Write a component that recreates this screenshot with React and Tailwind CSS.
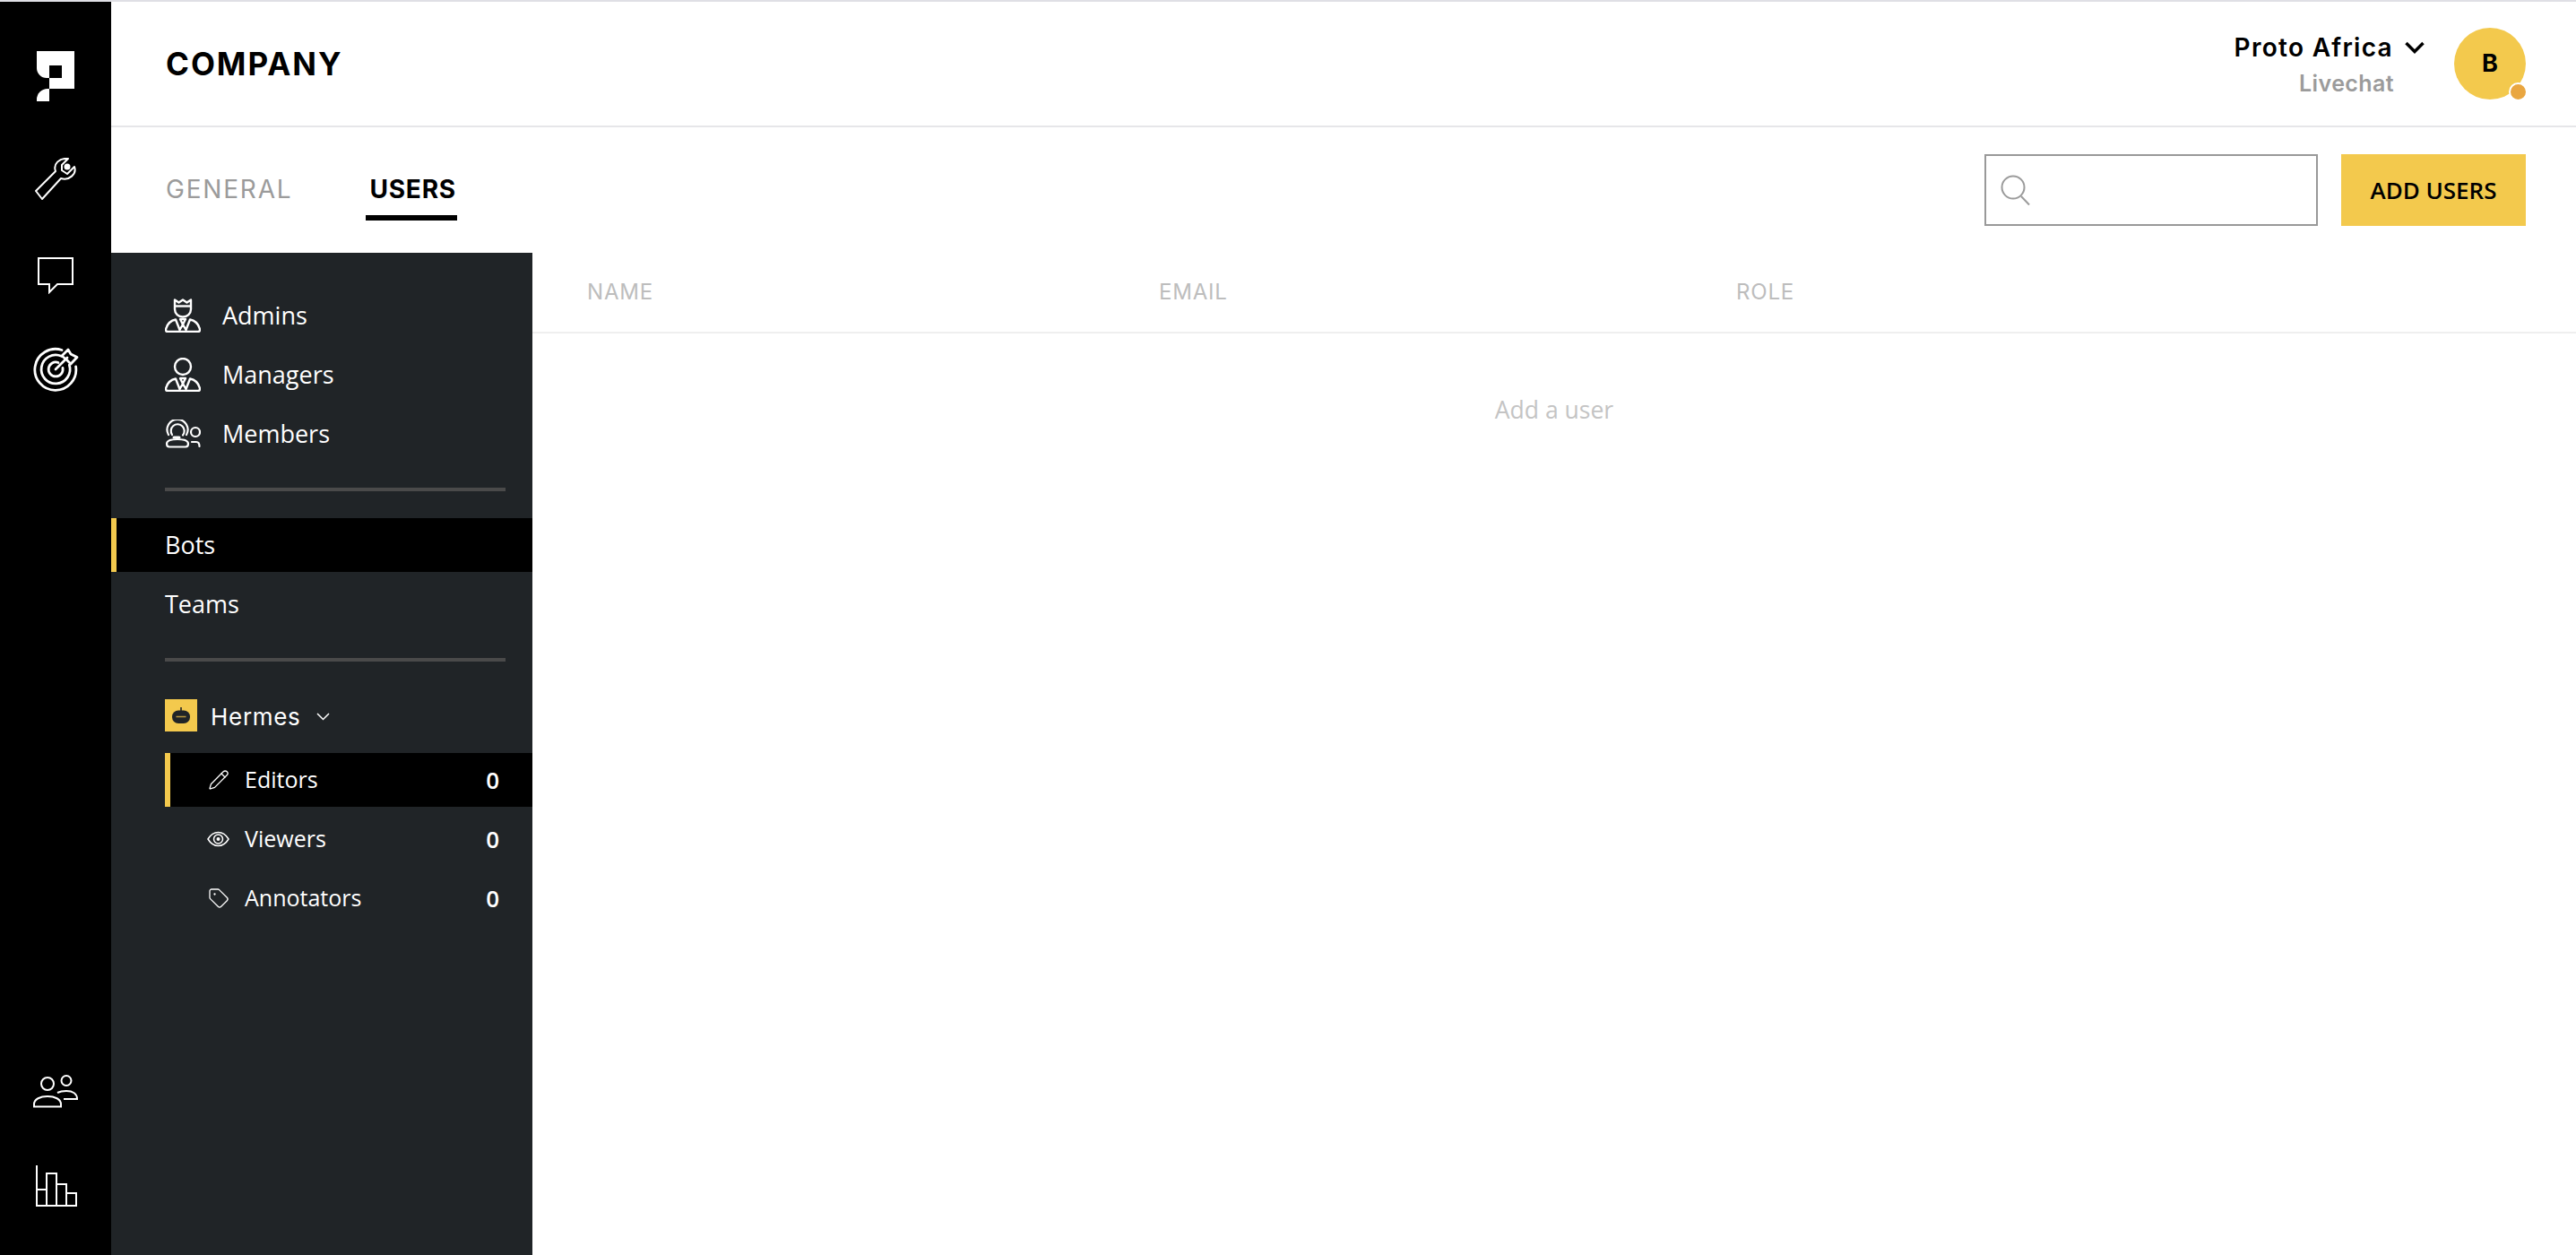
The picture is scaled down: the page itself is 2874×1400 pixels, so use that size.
import React from 'react';
import { Pencil, Tag } from 'lucide-react';

function Logo() {
  return (
    <svg width="42" height="56" viewBox="0 0 42 56" fill="#fff">
      <path fillRule="evenodd" d="M0 0H42V42H14V30H11A11 11 0 0 1 0 19ZM14 16V30H28V16Z" />
      <path d="M14 42V56H0V54A12 12 0 0 1 12 42Z" />
    </svg>
  );
}

function Wrench() {
  return (
    <svg width="47" height="48" viewBox="0 0 47 48" fill="none" stroke="#fff" strokeWidth="2" strokeLinejoin="round">
      <path d="M1 37L23 15C20 7 27 0 37 1L30 8V14L36 18L44 10C47 18 38 26 29 23L8 46Z" />
      <circle cx="36" cy="10" r="3.5" fill="#fff" stroke="none" />
    </svg>
  );
}

function Chat() {
  return (
    <svg width="40" height="41" viewBox="0 0 40 41" fill="none" stroke="#fff" strokeWidth="2">
      <path d="M1 1H39V30H22L13 39V30H1Z" />
    </svg>
  );
}

function Target() {
  return (
    <svg width="51" height="50" viewBox="0 0 51 50" fill="none" stroke="#fff" strokeWidth="2.8" strokeLinecap="round" strokeLinejoin="round">
      <path d="M32 3.5A23 23 0 1 0 47.6 22" />
      <path d="M31.5 10.3A16 16 0 1 0 40.3 20" />
      <path d="M28 17.5A8 8 0 1 0 33 23.5" />
      <path d="M25 25L38 12" />
      <path d="M32 10L39 3L42 8L49 11.5L42 19L37.5 14.5Z" />
    </svg>
  );
}

function TeamIcon() {
  return (
    <svg width="50" height="37" viewBox="0 0 50 37" fill="none" stroke="#fff" strokeWidth="2">
      <circle cx="16" cy="10" r="7" />
      <path d="M1 35.5V33C1 27 8 24 16 24C24 24 31 27 31 33V35.5Z" />
      <circle cx="37" cy="6.5" r="5.5" />
      <path d="M27 20C30 18.5 33 18 37 18C44 18 49 21 49 27H34" />
    </svg>
  );
}

function BarsIcon() {
  return (
    <svg width="47" height="47" viewBox="0 0 47 47" fill="none" stroke="#fff" strokeWidth="2">
      <path d="M2 0V45H46V31H35V45M35 45V21H24V45M24 45V9H13V45M13 45V27H2" />
    </svg>
  );
}

// shoulders and tie shared by the admin and manager icons
function Shoulders() {
  return (
    <g>
      <path d="M3 37H37C39 37 39.5 35 38.5 33C37 28 33 24.5 28 23.5L23.5 35L20 29L16.5 35L12 23.5C7 24.5 3 28 1.5 33C0.5 35 1 37 3 37Z" />
      <path d="M17 23H23L20 29Z" />
    </g>
  );
}

function AdminIcon() {
  return (
    <svg width="40" height="38" viewBox="0 0 40 38" fill="none" stroke="#fff" strokeWidth="2.4" strokeLinejoin="round">
      <path d="M11 1.500V12A9 8.500 0 0 0 29 12V1.500L24.500 4.500L20 1.500L15.500 4.500Z" />
      <path d="M11 8.500H29" />
      <Shoulders />
    </svg>
  );
}

function ManagerIcon() {
  return (
    <svg width="40" height="38" viewBox="0 0 40 38" fill="none" stroke="#fff" strokeWidth="2.4" strokeLinejoin="round">
      <circle cx="20" cy="10" r="9" />
      <Shoulders />
    </svg>
  );
}

function MemberIcon() {
  return (
    <svg width="40" height="32" viewBox="0 0 40 32" fill="none" stroke="#fff" strokeWidth="2.200" strokeLinecap="round">
      <path d="M4 17A11.500 11.500 0 1 1 24 17" />
      <path d="M8 17A7.500 7.500 0 1 1 20 17.500" />
      <path d="M10 20H16" strokeWidth="3" />
      <path d="M2 27C2 23.500 7 22 14 22C21 22 26 23.500 26 27C26 29.500 25 30.500 23 30.500H5C3 30.500 2 29.500 2 27Z" />
      <circle cx="34" cy="14" r="5" />
      <path d="M30 25H35C37 25 38.500 26.500 38.500 30" />
    </svg>
  );
}

function PotIcon() {
  return (
    <svg width="20" height="18" viewBox="0 0 20 18">
      <path d="M9.200 0H10.800V4H9.200Z" fill="#202427" />
      <rect x="0" y="3.500" width="20" height="14.500" rx="7" fill="#202427" />
      <path d="M4.500 10.500H15.500" stroke="#b8963c" strokeWidth="1.500" />
    </svg>
  );
}

function EyeIcon() {
  return (
    <svg width="25" height="18" viewBox="0 0 25 18" fill="none" stroke="#fff" strokeWidth="1.500">
      <path d="M1 9C4 4 8 1.500 12.500 1.500C17 1.500 21 4 24 9C21 14 17 16.500 12.500 16.500C8 16.500 4 14 1 9Z" />
      <circle cx="12.500" cy="9" r="5" />
      <circle cx="12.500" cy="9" r="2" fill="#fff" stroke="none" />
    </svg>
  );
}

function RoleRow({ icon, label }) {
  return (
    <div className="flex h-[60px] items-center gap-[24px] pl-[60px] text-[27px] font-medium text-white">
      <span className="flex w-[40px] justify-center">{icon}</span>
      <span>{label}</span>
    </div>
  );
}

function SubRow({ icon, label, active }) {
  return (
    <div className={`flex h-[60px] items-center justify-between pr-[37px] text-[25px] font-medium text-white ${active ? 'bg-black border-l-[6px] border-[#f3c94d] pl-[41px]' : 'pl-[47px]'}`}>
      <div className="flex items-center gap-[17px]">
        <span className="flex w-[25px] justify-center">{icon}</span>
        <span>{label}</span>
      </div>
      <span className="text-[26px] font-semibold">0</span>
    </div>
  );
}

export default function App() {
  return (
    <div className="flex h-screen flex-col overflow-hidden bg-white font-['Open_Sans',sans-serif] text-black">
      <div className="h-[2px] shrink-0 bg-[#dfdfe5]" />
      <div className="flex min-h-0 flex-1">
        {/* icon rail */}
        <nav className="flex w-[124px] shrink-0 flex-col items-center bg-black pt-[55px] pb-[53px]">
          <Logo />
          <div className="mt-[63px]"><Wrench /></div>
          <div className="mt-[63px]"><Chat /></div>
          <div className="mt-[59px]"><Target /></div>
          <div className="mt-auto"><TeamIcon /></div>
          <div className="mt-[64px]"><BarsIcon /></div>
        </nav>

        <div className="flex min-w-0 flex-1 flex-col">
          {/* header */}
          <header className="flex h-[140px] shrink-0 items-center justify-between border-b-2 border-[#e6e6e9] pr-[56px] pl-[61px]">
            <h1 className="font-['Inter',sans-serif] text-[35px] font-bold tracking-[2px]">COMPANY</h1>
            <div className="flex items-center gap-[33px]">
              <div className="flex flex-col items-end pt-[2px] font-['Inter',sans-serif]">
                <div className="flex items-center gap-[13px] text-[28px] leading-[36px] font-semibold tracking-[1.3px]">
                  <span>Proto Africa</span>
                  <svg width="22" height="14" viewBox="0 0 22 14" fill="none" stroke="#000" strokeWidth="3.500">
                    <path d="M1.500 2L11 11.500L20.500 2" />
                  </svg>
                </div>
                <span className="mt-[6px] mr-[34px] text-[25px] leading-[32px] font-semibold tracking-[0.4px] text-[#9b9b9b]">Livechat</span>
              </div>
              <div className="relative flex h-[80px] w-[80px] items-center justify-center rounded-full bg-[#f3c94d] font-['Inter',sans-serif] text-[27px] font-bold">
                B
                <span className="absolute right-[-2px] bottom-[-2px] h-[21px] w-[21px] rounded-full border-2 border-white bg-[#e9a640]" />
              </div>
            </div>
          </header>

          {/* tabs and actions */}
          <div className="flex h-[140px] shrink-0 items-center justify-between pr-[56px] pl-[61px]">
            <div className="flex gap-[82px] self-start pt-[52px] font-['Inter',sans-serif] text-[28px] leading-[34px]">
              <span className="font-normal tracking-[1.8px] text-[#9b9b9b]">GENERAL</span>
              <span className="border-b-[6px] border-black pr-[1px] pb-[12px] pl-[4px] font-bold tracking-[0.8px]">USERS</span>
            </div>
            <div className="flex items-center gap-[26px]">
              <div className="flex h-[80px] w-[372px] items-center border-2 border-[#999] pl-[16px]">
                <svg width="34" height="34" viewBox="0 0 34 34" fill="none" stroke="#9b9b9b" strokeWidth="2">
                  <circle cx="14" cy="14" r="12.500" />
                  <path d="M23 24L32 33.500" />
                </svg>
              </div>
              <button className="flex h-[80px] w-[206px] items-center justify-center bg-[#f3c94d] text-[26px] font-semibold">ADD USERS</button>
            </div>
          </div>

          <div className="flex min-h-0 flex-1">
            {/* side panel */}
            <aside className="w-[470px] shrink-0 bg-[#202427] pt-[40px]">
              <div className="flex flex-col gap-[6px]">
                <RoleRow icon={<AdminIcon />} label="Admins" />
                <RoleRow icon={<ManagerIcon />} label="Managers" />
                <RoleRow icon={<MemberIcon />} label="Members" />
              </div>
              <div className="mt-[30px] mr-[30px] ml-[60px] h-[4px] bg-[#4a4a4a]" />
              <div className="mt-[30px] flex flex-col gap-[6px] text-[27px] font-medium text-white">
                <div className="flex h-[60px] items-center border-l-[6px] border-[#f3c94d] bg-black pl-[54px]">Bots</div>
                <div className="flex h-[60px] items-center pl-[60px]">Teams</div>
              </div>
              <div className="mt-[30px] mr-[30px] ml-[60px] h-[4px] bg-[#4a4a4a]" />
              <div className="mt-[30px] flex h-[60px] items-center pl-[60px] font-['Inter',sans-serif] text-[26px] tracking-[0.7px] text-white">
                <span className="flex h-[36px] w-[36px] items-center justify-center bg-[#f3c94d]"><PotIcon /></span>
                <span className="mt-[3px] ml-[15px]">Hermes</span>
                <svg className="mt-[2px] ml-[17px]" width="15" height="9" viewBox="0 0 15 9" fill="none" stroke="#fff" strokeWidth="1.500">
                  <path d="M1 1L7.500 7.500L14 1" />
                </svg>
              </div>
              <div className="mt-[12px] ml-[60px] flex flex-col gap-[6px]">
                <SubRow active icon={<Pencil size={24} color="#fff" strokeWidth={1.300} />} label="Editors" />
                <SubRow icon={<EyeIcon />} label="Viewers" />
                <SubRow icon={<Tag size={24} color="#fff" strokeWidth={1.300} />} label="Annotators" />
              </div>
            </aside>

            {/* table */}
            <main className="min-w-0 flex-1">
              <div className="grid h-[90px] grid-cols-[638px_644px_1fr] items-center border-b-2 border-[#efefef] pl-[61px] font-['Inter',sans-serif] text-[24px] tracking-[0.8px] text-[#bdbdbd]">
                <span>NAME</span>
                <span>EMAIL</span>
                <span>ROLE</span>
              </div>
              <p className="mt-[67px] text-center text-[26.500px] leading-[36px] text-[#c4c4c4]">Add a user</p>
            </main>
          </div>
        </div>
      </div>
    </div>
  );
}
